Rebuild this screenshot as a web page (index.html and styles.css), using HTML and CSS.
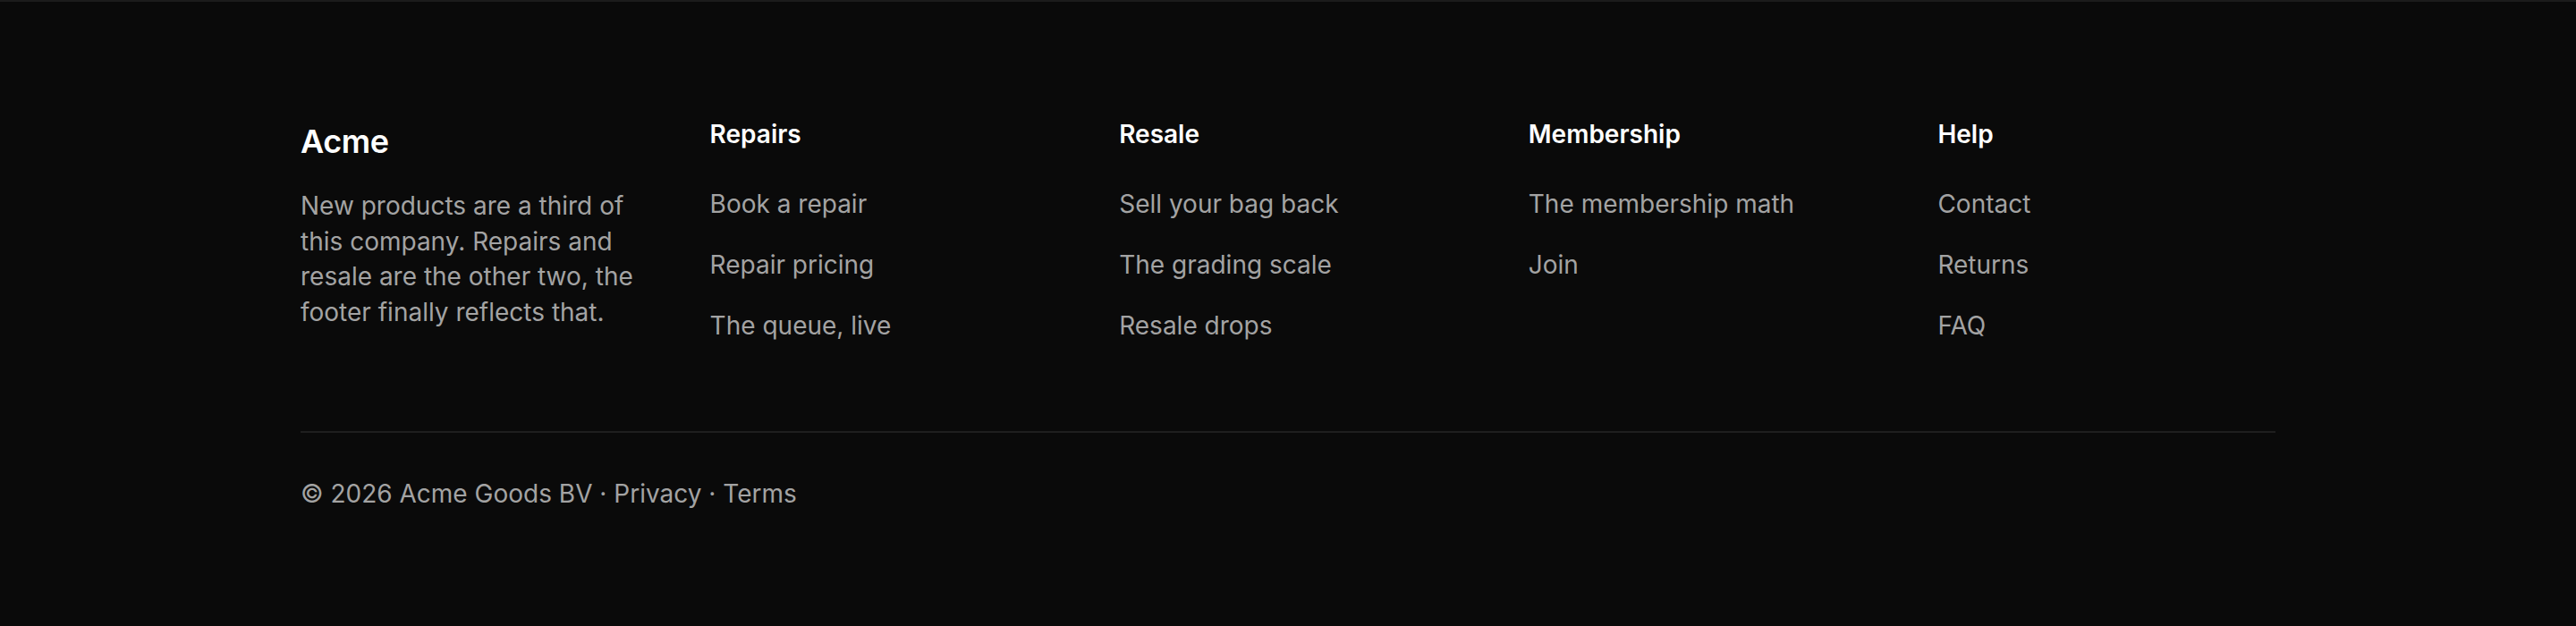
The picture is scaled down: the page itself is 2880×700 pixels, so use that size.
FILE: index.html
```html
<!DOCTYPE html>
<html lang="en">
<head>
<meta charset="utf-8">
<title>Acme footer</title>
<link rel="stylesheet" href="styles.css">
</head>
<body>
<footer class="footer">
  <div class="footer-inner">
    <div class="footer-grid">
      <div class="brand">
        <div class="brand-name">Acme</div>
        <p class="brand-text">New products are a third of this company. Repairs and resale are the other two, the footer finally reflects that.</p>
      </div>
      <nav class="col">
        <h3 class="col-title">Repairs</h3>
        <ul class="col-links">
          <li><a href="#">Book a repair</a></li>
          <li><a href="#">Repair pricing</a></li>
          <li><a href="#">The queue, live</a></li>
        </ul>
      </nav>
      <nav class="col">
        <h3 class="col-title">Resale</h3>
        <ul class="col-links">
          <li><a href="#">Sell your bag back</a></li>
          <li><a href="#">The grading scale</a></li>
          <li><a href="#">Resale drops</a></li>
        </ul>
      </nav>
      <nav class="col">
        <h3 class="col-title">Membership</h3>
        <ul class="col-links">
          <li><a href="#">The membership math</a></li>
          <li><a href="#">Join</a></li>
        </ul>
      </nav>
      <nav class="col">
        <h3 class="col-title">Help</h3>
        <ul class="col-links">
          <li><a href="#">Contact</a></li>
          <li><a href="#">Returns</a></li>
          <li><a href="#">FAQ</a></li>
        </ul>
      </nav>
    </div>
    <div class="footer-bottom">
      <p class="legal">© 2026 Acme Goods BV · <a href="#">Privacy</a> · <a href="#">Terms</a></p>
    </div>
  </div>
</footer>
</body>
</html>
```
FILE: styles.css
```css
* { box-sizing: border-box; }

html, body {
  margin: 0;
  padding: 0;
  background: #0a0a0a;
}

body {
  font-family: Inter, "Noto Sans", "Liberation Sans", sans-serif;
  color: #a3a3a3;
  min-height: 700px;
}

.footer {
  border-top: 2px solid #1c1c1c;
  background: #0a0a0a;
  padding: 129px 0 96px;
}

.footer-inner {
  width: 2208px;
  margin: 0 auto;
}

.footer-grid {
  display: grid;
  grid-template-columns: repeat(5, 1fr);
  column-gap: 80px;
  align-items: start;
}

.brand-name {
  font-size: 36px;
  line-height: 54px;
  font-weight: 600;
  color: #ffffff;
  letter-spacing: -0.4px;
}

.brand-text {
  margin: 26.2px 0 0;
  font-size: 28px;
  line-height: 39.6px;
  color: #a3a3a3;
}

.col-title {
  margin: 0 0 38.2px;
  font-size: 28px;
  line-height: 39.6px;
  font-weight: 600;
  color: #ffffff;
}

.col-links {
  list-style: none;
  margin: 0;
  padding: 0;
  display: flex;
  flex-direction: column;
  gap: 28.4px;
}

.col-links li {
  font-size: 28px;
  line-height: 39.6px;
}

.col-links a,
.legal a {
  color: #a3a3a3;
  text-decoration: none;
}

.footer-bottom {
  margin-top: 97.6px;
  border-top: 2px solid #1f1f1f;
  padding-top: 49.3px;
}

.legal {
  margin: 0;
  font-size: 28px;
  line-height: 39.6px;
  color: #a3a3a3;
}
```
